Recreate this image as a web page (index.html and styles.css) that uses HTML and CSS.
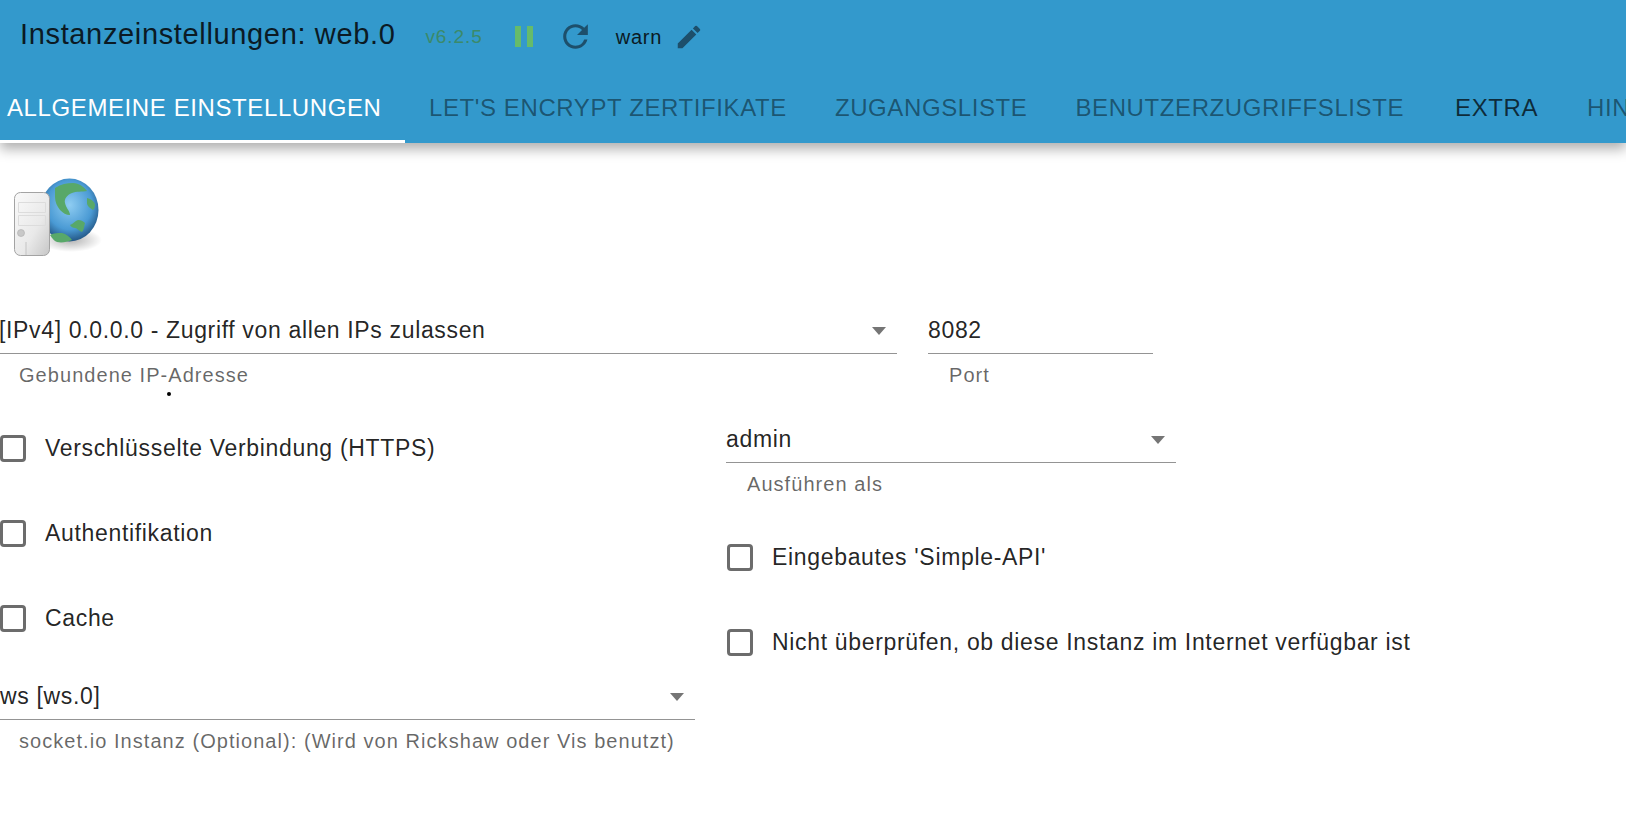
FILE: index.html
```html
<!DOCTYPE html>
<html lang="de">
<head>
<meta charset="utf-8">
<title>Instanzeinstellungen: web.0</title>
<link rel="stylesheet" href="styles.css">
</head>
<body>
<header class="appbar">
  <div class="toolbar">
    <h1 class="title">Instanzeinstellungen: web.0</h1>
    <span class="version">v6.2.5</span>
    <svg class="icon pause" viewBox="0 0 18 21"><path d="M0 0h6v21H0zM12 0h6v21h-6z"/></svg>
    <svg class="icon reload" viewBox="0 0 24 24"><path d="M17.650 6.350A7.958 7.958 0 0 0 12 4c-4.420 0-7.990 3.580-7.990 8s3.570 8 7.990 8c3.730 0 6.840-2.550 7.730-6h-2.080A5.990 5.990 0 0 1 12 18c-3.310 0-6-2.690-6-6s2.690-6 6-6c1.660 0 3.140.69 4.220 1.780L13 11h7V4l-2.350 2.350z"/></svg>
    <span class="loglevel">warn</span>
    <svg class="icon edit" viewBox="0 0 24 24"><path d="M3 17.250V21h3.750L17.810 9.940l-3.750-3.750L3 17.250zM20.710 7.040a1 1 0 0 0 0-1.410l-2.340-2.340a1 1 0 0 0-1.410 0l-1.830 1.830 3.750 3.750 1.830-1.830z"/></svg>
  </div>
  <nav class="tabs">
    <span class="tab active">Allgemeine Einstellungen</span>
    <span class="tab">Let's Encrypt Zertifikate</span>
    <span class="tab">Zugangsliste</span>
    <span class="tab">Benutzerzugriffsliste</span>
    <span class="tab extra">Extra</span>
    <span class="tab">Hinweise</span>
  </nav>
</header>
<main class="form">
  <svg class="logo" viewBox="0 0 90 84">
    <defs>
      <radialGradient id="sea" cx="50%" cy="42%" r="60%"><stop offset="0" stop-color="#8fcdf2"/><stop offset=".65" stop-color="#4a9ad4"/><stop offset="1" stop-color="#1f4f7c"/></radialGradient>
      <linearGradient id="tower" x1="0" y1="0" x2="1" y2="1"><stop offset="0" stop-color="#fafafa"/><stop offset=".6" stop-color="#e9e9e9"/><stop offset="1" stop-color="#c6c6c6"/></linearGradient>
      <radialGradient id="shade"><stop offset="0" stop-color="#000" stop-opacity=".3"/><stop offset="1" stop-color="#000" stop-opacity="0"/></radialGradient>
    </defs>
    <ellipse cx="58" cy="64" rx="31" ry="12" fill="url(#shade)"/>
    <ellipse cx="56.500" cy="34" rx="29" ry="31.500" fill="url(#sea)"/>
    <path d="M42 12C48 8 54 7 60 7c6 0 11 4 14 8-5 1-11 0-15 2-5 2-8 6-7 10 1 5 5 8 5 12-4 0-7-2-10-5-3-4-5-8-5-13z" fill="#58a869"/>
    <path d="M74 22c4 1 8 4 8 7 0 2-1 4-2 5-3-2-6-4-6-7z" fill="#58a869"/>
    <path d="M57 49c3-1 5-4 8-5 3 0 5 1 7 3-1 3-1 7-3 9-3-1-5-4-7-4-2 0-4-1-5-3z" fill="#58a869"/>
    <path d="M37 59c4-2 8-2 12-2 4 1 8 4 10 7-5 2-10 3-15 2-3-1-5-4-7-7z" fill="#58a869"/>
    <rect x="1.500" y="16.500" width="35" height="63" rx="6" fill="url(#tower)" stroke="#a3a3a3"/>
    <path d="M5.500 26.500h27v10h-27zM5.500 39.500h27v10h-27z" fill="none" stroke="#dcdcdc"/>
    <circle cx="8" cy="57" r="3.500" fill="#c8c8c8" stroke="#adadad" stroke-width=".6"/>
    <path d="M13 66v13" stroke="#c4c4c4"/>
  </svg>

  <div class="row-top">
    <div class="field field-ip">
      <div class="control"><span class="value">[IPv4] 0.0.0.0 - Zugriff von allen IPs zulassen</span><i class="caret"></i></div>
      <p class="helper">Gebundene IP-Adresse</p>
      <i class="speck"></i>
    </div>
    <div class="field field-port">
      <div class="control"><span class="value">8082</span></div>
      <p class="helper">Port</p>
    </div>
  </div>

  <div class="columns">
    <div class="col-left">
      <label class="check"><i class="box"></i>Verschlüsselte Verbindung (HTTPS)</label>
      <label class="check"><i class="box"></i>Authentifikation</label>
      <label class="check"><i class="box"></i>Cache</label>
      <div class="field field-ws">
        <div class="control"><span class="value">ws [ws.0]</span><i class="caret"></i></div>
        <p class="helper">socket.io Instanz (Optional): (Wird von Rickshaw oder Vis benutzt)</p>
      </div>
    </div>
    <div class="col-right">
      <div class="field field-admin">
        <div class="control"><span class="value">admin</span><i class="caret"></i></div>
        <p class="helper">Ausführen als</p>
      </div>
      <label class="check"><i class="box"></i>Eingebautes 'Simple-API'</label>
      <label class="check"><i class="box"></i>Nicht überprüfen, ob diese Instanz im Internet verfügbar ist</label>
    </div>
  </div>
</main>
</body>
</html>
```
FILE: styles.css
```css
* { box-sizing: border-box; }
html, body { margin: 0; height: 100%; overflow: hidden; background: #fff; }
body { font-family: "Liberation Sans", Arial, sans-serif; color: rgba(0,0,0,.87); }

.appbar { height: 143px; background: #3399cc; box-shadow: 0 6px 12px rgba(0,0,0,.32); position: relative; }
.toolbar { height: 69px; display: flex; align-items: center; padding-left: 20px; }
.title { margin: 0 0 1px; font-size: 29px; font-weight: 400; letter-spacing: .65px; color: #0b1a24; }
.version { margin: 5px 0 0 30px; font-size: 19px; letter-spacing: .9px; color: #3b8a6a; }
.icon { display: block; }
.pause { width: 18px; height: 21px; margin: 4px 0 0 32px; fill: #66bb6a; }
.reload { width: 37px; height: 37px; margin: 3px 0 0 24px; fill: #1d4f6b; }
.loglevel { margin: 5px 0 0 22px; font-size: 20px; letter-spacing: .8px; color: #0b1a24; }
.edit { width: 30px; height: 30px; margin: 4px 0 0 12px; fill: #1d4f6b; }

.tabs { height: 74px; display: flex; overflow: hidden; }
.tab { flex: none; height: 74px; line-height: 77px; padding: 0 24px; font-size: 24px; letter-spacing: .6px; text-transform: uppercase; color: rgba(0,0,0,.46); white-space: nowrap; }
.tab.active { color: #fff; width: 405px; padding: 0 0 0 7px; border-bottom: 3px solid #fff; }
.tab.extra { color: rgba(0,0,0,.72); margin: 0 1px 0 3px; }

.form { display: block; }
.logo { display: block; width: 90px; height: 84px; margin: 33px 0 0 13px; }

.field { position: relative; }
.control { height: 38px; display: flex; align-items: flex-start; justify-content: space-between; border-bottom: 1px solid #949494; }
.value { font-size: 23px; line-height: 28px; letter-spacing: .65px; white-space: nowrap; }
.caret { width: 0; height: 0; margin: 11px 11px 0 0; border: 7px solid transparent; border-top: 8px solid #757575; border-bottom: 0; }
.helper { margin: 0; padding-top: 9px; padding-left: 20px; font-size: 20px; line-height: 24px; letter-spacing: 1.05px; color: rgba(0,0,0,.6); white-space: nowrap; }
.field-ws .helper { padding-left: 19px; }
.field-port .helper, .field-admin .helper { padding-left: 21px; }

.row-top { display: flex; margin-top: 56px; }
.field-ip { width: 898px; margin-left: -1px; }
.field-port { width: 225px; margin-left: 31px; }
.speck { position: absolute; left: 168px; top: 76px; width: 4px; height: 4px; border-radius: 50%; background: #000; }

.columns { display: flex; margin-top: 48px; }
.col-left { width: 726px; flex: none; }
.col-right { flex: 1; }

.check { display: flex; align-items: center; height: 27px; margin-bottom: 58px; font-size: 23px; line-height: 27px; letter-spacing: .67px; white-space: nowrap; }
.box { flex: none; width: 26px; height: 27px; margin-right: 19px; border: 3px solid #6c6c6c; border-radius: 4px; }
.col-right .check { margin-left: 1px; }

.field-ws { width: 695px; margin-top: -8px; }
.field-admin { width: 450px; margin-top: -10px; margin-bottom: 48px; }
```
